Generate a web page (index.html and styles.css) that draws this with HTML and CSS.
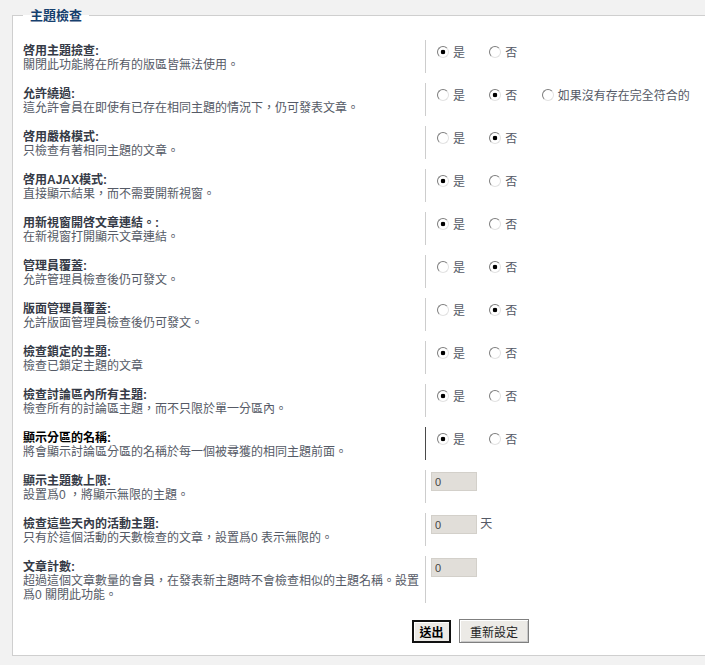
FILE: index.html
```html
<!DOCTYPE html>
<html lang="zh-Hant">
<head>
    <meta charset="UTF-8">
    <title>主題檢查</title>
    <link rel="stylesheet" href="styles.css">
</head>
<body>
    <form id="dupe-settings">
        <fieldset class="box">
            <legend>主題檢查</legend>

            <div class="row">
                <div class="label">
                    <b>啓用主題撿查:</b>
                    <span>關閉此功能將在所有的版區皆無法使用。</span>
                </div>
                <div class="field">
                    <label class="opt"><input type="radio" name="enable" checked>是</label>
                    <label class="opt"><input type="radio" name="enable">否</label>
                </div>
            </div>

            <div class="row">
                <div class="label">
                    <b>允許繞過:</b>
                    <span>這允許會員在即使有已存在相同主題的情況下，仍可發表文章。</span>
                </div>
                <div class="field">
                    <label class="opt"><input type="radio" name="bypass">是</label>
                    <label class="opt"><input type="radio" name="bypass" checked>否</label>
                    <label class="opt"><input type="radio" name="bypass">如果沒有存在完全符合的</label>
                </div>
            </div>

            <div class="row">
                <div class="label">
                    <b>啓用嚴格模式:</b>
                    <span>只檢查有著相同主題的文章。</span>
                </div>
                <div class="field">
                    <label class="opt"><input type="radio" name="strict">是</label>
                    <label class="opt"><input type="radio" name="strict" checked>否</label>
                </div>
            </div>

            <div class="row">
                <div class="label">
                    <b>啓用AJAX模式:</b>
                    <span>直接顯示結果，而不需要開新視窗。</span>
                </div>
                <div class="field">
                    <label class="opt"><input type="radio" name="ajax" checked>是</label>
                    <label class="opt"><input type="radio" name="ajax">否</label>
                </div>
            </div>

            <div class="row">
                <div class="label">
                    <b>用新視窗開啓文章連結。:</b>
                    <span>在新視窗打開顯示文章連結。</span>
                </div>
                <div class="field">
                    <label class="opt"><input type="radio" name="newwin" checked>是</label>
                    <label class="opt"><input type="radio" name="newwin">否</label>
                </div>
            </div>

            <div class="row">
                <div class="label">
                    <b>管理員覆蓋:</b>
                    <span>允許管理員檢查後仍可發文。</span>
                </div>
                <div class="field">
                    <label class="opt"><input type="radio" name="admin">是</label>
                    <label class="opt"><input type="radio" name="admin" checked>否</label>
                </div>
            </div>

            <div class="row">
                <div class="label">
                    <b>版面管理員覆蓋:</b>
                    <span>允許版面管理員檢查後仍可發文。</span>
                </div>
                <div class="field">
                    <label class="opt"><input type="radio" name="mod">是</label>
                    <label class="opt"><input type="radio" name="mod" checked>否</label>
                </div>
            </div>

            <div class="row">
                <div class="label">
                    <b>檢查鎖定的主題:</b>
                    <span>檢查已鎖定主題的文章</span>
                </div>
                <div class="field">
                    <label class="opt"><input type="radio" name="locked" checked>是</label>
                    <label class="opt"><input type="radio" name="locked">否</label>
                </div>
            </div>

            <div class="row">
                <div class="label">
                    <b>檢查討論區內所有主題:</b>
                    <span>檢查所有的討論區主題，而不只限於單一分區內。</span>
                </div>
                <div class="field">
                    <label class="opt"><input type="radio" name="allforums" checked>是</label>
                    <label class="opt"><input type="radio" name="allforums">否</label>
                </div>
            </div>

            <!-- row under the mouse -->
            <div class="row active">
                <div class="label">
                    <b>顯示分區的名稱:</b>
                    <span>將會顯示討論區分區的名稱於每一個被尋獲的相同主題前面。</span>
                </div>
                <div class="field">
                    <label class="opt"><input type="radio" name="forumname" checked>是</label>
                    <label class="opt"><input type="radio" name="forumname">否</label>
                </div>
            </div>

            <div class="row">
                <div class="label">
                    <b>顯示主題數上限:</b>
                    <span>設置爲0 ，將顯示無限的主題。</span>
                </div>
                <div class="field">
                    <input type="text" class="num" value="0">
                </div>
            </div>

            <div class="row">
                <div class="label">
                    <b>檢查這些天內的活動主題:</b>
                    <span>只有於這個活動的天數檢查的文章，設置爲0 表示無限的。</span>
                </div>
                <div class="field">
                    <input type="text" class="num" value="0"> <span class="unit">天</span>
                </div>
            </div>

            <div class="row">
                <div class="label">
                    <b>文章計數:</b>
                    <span>超過這個文章數量的會員，在發表新主題時不會檢查相似的主題名稱。設置爲0 關閉此功能。</span>
                </div>
                <div class="field">
                    <input type="text" class="num" value="0">
                </div>
            </div>

            <div class="buttons">
                <button type="submit" class="main">送出</button>
                <button type="reset">重新設定</button>
            </div>
        </fieldset>
    </form>
</body>
</html>
```

FILE: styles.css
```css
html, body {
    margin: 0;
    padding: 0;
    overflow: hidden;
}

body {
    background-color: #f2f2f2;
    font-family: "Liberation Sans", "Noto Sans CJK TC", sans-serif;
    font-size: 12px;
    line-height: 14px;
    color: #555a66;
}

.box {
    margin: 8px 0 0 12px;
    padding: 17px 0 12px 10px;
    width: 900px;
    min-width: 0;
    border: 1px solid #cfcfcf;
    background-color: #fff;
}

.box legend {
    padding: 0 7px;
    font-size: 13px;
    line-height: 15px;
    font-weight: bold;
    color: #16406e;
}

.row {
    display: grid;
    grid-template-columns: 402px 1fr;
    margin-bottom: 10px;
}

.label {
    padding: 4px 2px 1px 0;
}

.label b {
    display: block;
    color: #353a46;
}

.label span {
    display: block;
}

.field {
    border-left: 1px solid #cdcdcd;
    padding: 2px 0 0 5px;
}

.active .label b {
    color: #000;
}

.active .field {
    border-left-color: #4a4a4a;
}

.opt {
    display: inline-flex;
    align-items: flex-start;
    margin-top: 4px;
    margin-right: 15px;
    color: #555a66;
}

.opt input {
    appearance: none;
    -webkit-appearance: none;
    width: 12px;
    height: 12px;
    margin: 0 4px 0 6px;
    border: 1px solid;
    border-color: #7d7d7d #e2e2e2 #e2e2e2 #7d7d7d;
    border-radius: 50%;
    background-color: #fff;
}

.opt input:checked {
    background: radial-gradient(circle, #000 0 2px, #fff 2.6px);
}

.num {
    width: 46px;
    height: 19px;
    box-sizing: border-box;
    margin: 0;
    padding: 0 3px;
    border: 1px solid #d3d0ca;
    background-color: #e1ded9;
    font-family: "Liberation Sans", sans-serif;
    font-size: 11px;
    color: #444;
    vertical-align: top;
}

.unit {
    display: inline-block;
    margin-top: 2px;
}

.buttons {
    display: flex;
    gap: 8px;
    padding: 6px 0 0 389px;
}

button {
    font-family: "Liberation Sans", "Noto Sans CJK TC", sans-serif;
    font-size: 12px;
    color: #222;
    background-color: #eceae6;
    padding: 0;
    height: 24px;
}

button.main {
    width: 39px;
    height: 23px;
    margin-top: 1px;
    font-weight: bold;
    color: #000;
    border: 2px solid #111;
    box-shadow: inset 1px 1px 0 #fff;
}

button[type="reset"] {
    width: 70px;
    border: 1px solid #7f7f7f;
    box-shadow: inset 1px 1px 0 #fff, inset -1px -1px 0 #c8c8c8;
}
```
